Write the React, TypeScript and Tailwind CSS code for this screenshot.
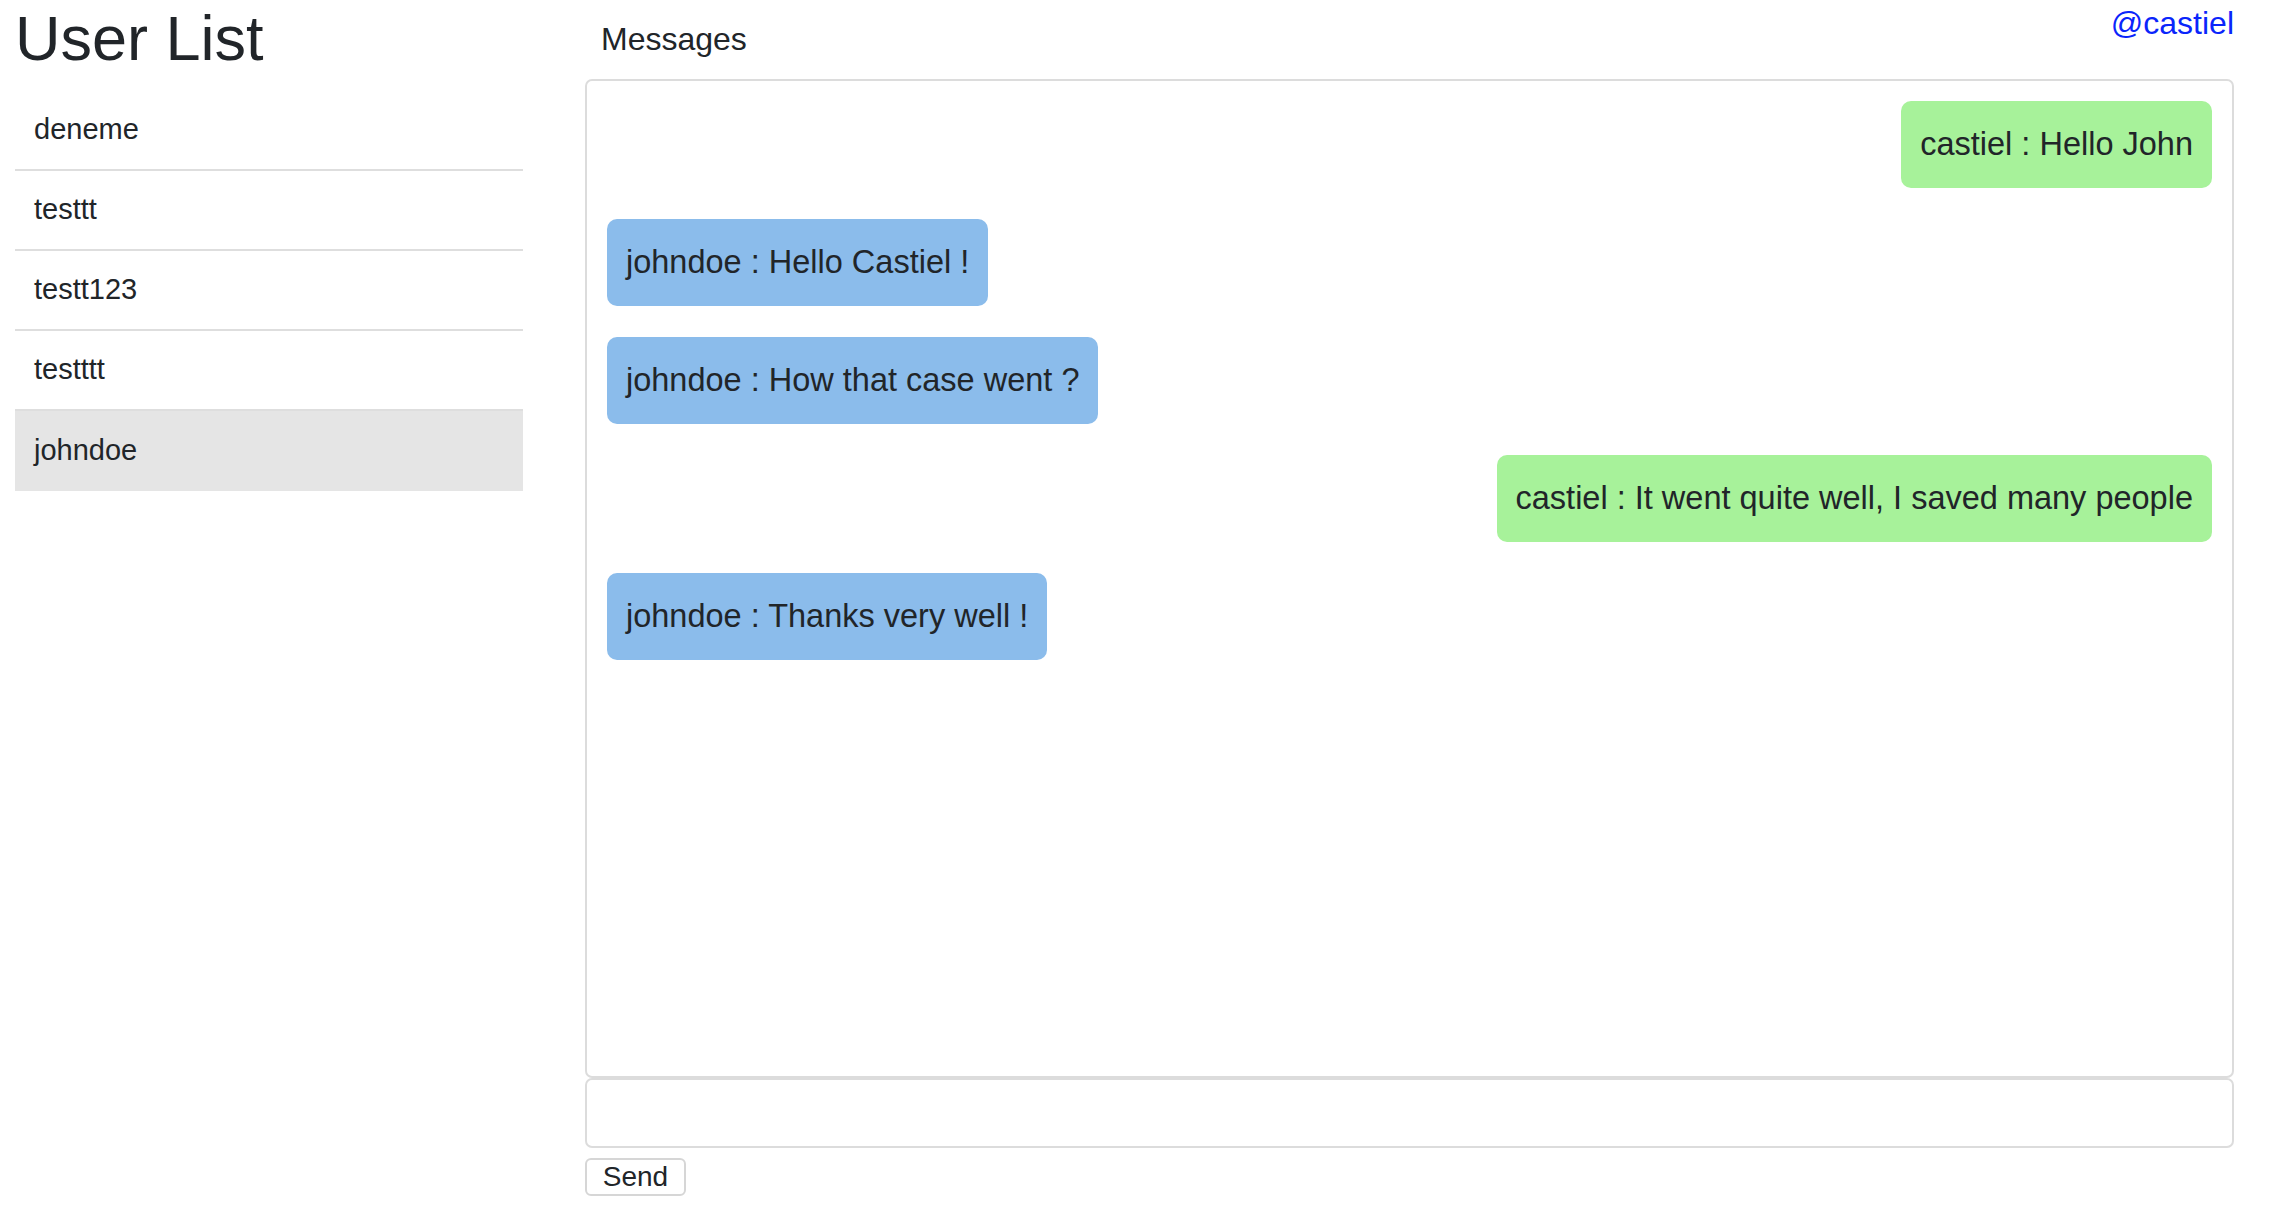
import React from 'react';

type Message = {
  from: string;
  text: string;
  mine: boolean;
};

const USERS = ['deneme', 'testtt', 'testt123', 'testttt', 'johndoe'];

const MESSAGES: Message[] = [
  { from: 'castiel', text: 'Hello John', mine: true },
  { from: 'johndoe', text: 'Hello Castiel !', mine: false },
  { from: 'johndoe', text: 'How that case went ?', mine: false },
  { from: 'castiel', text: 'It went quite well, I saved many people', mine: true },
  { from: 'johndoe', text: 'Thanks very well !', mine: false },
];

const UserList: React.FC<{ selected: string }> = ({ selected }) => (
  <div className="w-[508px] shrink-0">
    <h1 className="text-[63px] leading-[76px] font-medium text-[#212529]">User List</h1>
    <ul className="mt-[15px]">
      {USERS.map((name, i) => (
        <li
          key={name}
          className={
            name === selected
              ? 'h-[80px] flex items-center px-[19px] text-[29px] text-[#212529] bg-[#e5e5e5]'
              : i < USERS.length - 1
                ? 'h-[80px] flex items-center px-[19px] text-[29px] text-[#212529] border-b-2 border-[#dedede]'
                : 'h-[80px] flex items-center px-[19px] text-[29px] text-[#212529]'
          }
        >
          {name}
        </li>
      ))}
    </ul>
  </div>
);

const Bubble: React.FC<{ msg: Message }> = ({ msg }) => (
  <div className={msg.mine ? 'flex justify-end' : 'flex justify-start'}>
    <div
      className={
        msg.mine
          ? 'px-[19px] py-[19px] rounded-[10px] bg-[#a7f29a] text-[32.5px] leading-[49px] text-[#212529] whitespace-nowrap'
          : 'px-[19px] py-[19px] rounded-[10px] bg-[#8bbceb] text-[32.5px] leading-[49px] text-[#212529] whitespace-nowrap'
      }
    >
      {msg.from} : {msg.text}
    </div>
  </div>
);

export default function App() {
  const currentUser = 'castiel';

  return (
    <div className="w-[2292px] h-[1226px] bg-white flex pl-[15px] pr-[58px] font-['Liberation_Sans',Arial,sans-serif] overflow-hidden">
      <UserList selected="johndoe" />

      <div className="ml-[62px] flex-1 flex flex-col">
        <div className="h-[79px] flex justify-between items-start">
          <span className="ml-[16px] pt-[19px] text-[32px] leading-[40px] text-[#212529]">Messages</span>
          <a className="pt-[3px] text-[32px] leading-[40px] text-[#0a25fb]">@{currentUser}</a>
        </div>

        <div className="h-[999px] border-2 border-[#dcdcdc] rounded-[7px] p-[20px] flex flex-col gap-[31px]">
          {MESSAGES.map((m, i) => (
            <Bubble key={i} msg={m} />
          ))}
        </div>

        <input
          type="text"
          className="h-[70px] w-full border-2 border-[#dcdcdc] rounded-[7px] px-[16px] text-[30px] outline-none"
        />

        <div className="mt-[10px]">
          <button className="h-[38px] w-[101px] border-2 border-[#d6d6d6] rounded-[6px] bg-white text-[28px] leading-[30px] text-[#212529]">
            Send
          </button>
        </div>
      </div>
    </div>
  );
}
